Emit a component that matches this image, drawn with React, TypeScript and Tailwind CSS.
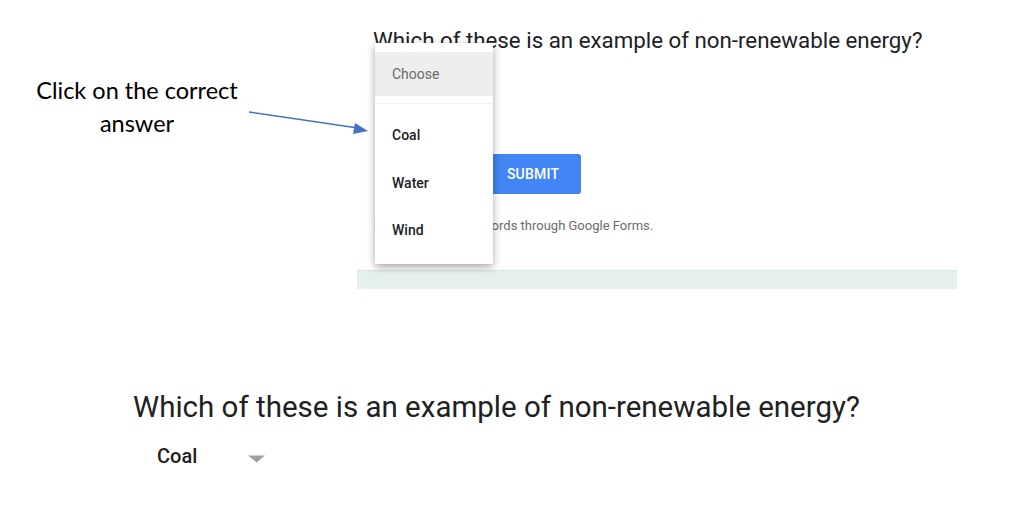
import React from "react";

const roboto = { fontFamily: "Roboto, 'Noto Sans', sans-serif" };

const options = ["Coal", "Water", "Wind"];

function PointerArrow() {
  return (
    <svg
      className="absolute left-[246px] top-[108px]"
      width="128"
      height="30"
      viewBox="0 0 128 30"
    >
      <line x1="3" y1="4" x2="112" y2="20" stroke="#4472c4" strokeWidth="1.6" />
      <polygon points="122,23 109,15 107,26" fill="#4472c4" />
    </svg>
  );
}

function ChoiceMenu() {
  return (
    <div className="absolute left-[375px] top-[43px] flex h-[221px] w-[118px] flex-col bg-white pt-[9px] shadow-[0_3px_8px_rgba(0,0,0,0.35)]">
      <div className="flex h-[44px] items-center bg-[#eeeeee] pl-[17px] text-[14px] text-[#6b6b6b]">
        Choose
      </div>
      <div className="mt-[7px] h-px bg-[#f1f1f1]" />
      <div className="mt-[8px] flex flex-col">
        {options.map((o) => (
          <div
            key={o}
            className="flex h-[47.5px] items-center pl-[17px] text-[14px] font-medium text-[#202124]"
          >
            {o}
          </div>
        ))}
      </div>
    </div>
  );
}

export default function App() {
  return (
    <div
      className="relative h-[520px] w-[1020px] overflow-hidden bg-white"
      style={roboto}
    >
      <div className="flex">
        <div className="flex w-[357px] justify-center pr-[83px] pt-[74px]">
          <p
            className="text-center text-[23.5px] leading-[33px] text-black"
            style={{ fontFamily: "Lato, 'Open Sans', sans-serif" }}
          >
            Click on the correct
            <br />
            answer
          </p>
        </div>

        <div className="flex w-[600px] flex-col">
          <div className="flex flex-col px-4 pt-[27px]">
            <h2 className="text-[22.3px] leading-[26px] text-[#202124]">
              Which of these is an example of non-renewable energy?
            </h2>
            <div className="mt-[101px] flex">
              <button className="ml-[112px] flex h-[40px] w-[96px] items-center justify-center rounded-[3px] bg-[#4285f4] text-[14px] font-medium tracking-[0.2px] text-white">
                SUBMIT
              </button>
            </div>
            <p className="ml-[1px] mt-[24px] text-[13px] leading-[16px] text-[#6d6d6d]">
              Never submit passwords through Google Forms.
            </p>
          </div>
          <div className="mt-[36px] h-[19px] border-t border-[#d7e6de] bg-[#e3f1ea]" />
        </div>
      </div>

      <div className="flex flex-col pl-[133px] pt-[100px]">
        <h1 className="text-[29.5px] leading-[36px] text-[#212121]">
          Which of these is an example of non-renewable energy?
        </h1>
        <div className="mt-[19px] flex items-start pl-[24px]">
          <span className="text-[20px] font-medium leading-[24px] text-[#212121]">
            Coal
          </span>
          <svg className="ml-[50px] mt-[11px]" width="19" height="8" viewBox="0 0 19 8">
            <polygon points="1,0.5 18,0.5 9.5,7.5" fill="#a0a0a0" />
          </svg>
        </div>
      </div>

      <PointerArrow />
      <ChoiceMenu />
    </div>
  );
}
